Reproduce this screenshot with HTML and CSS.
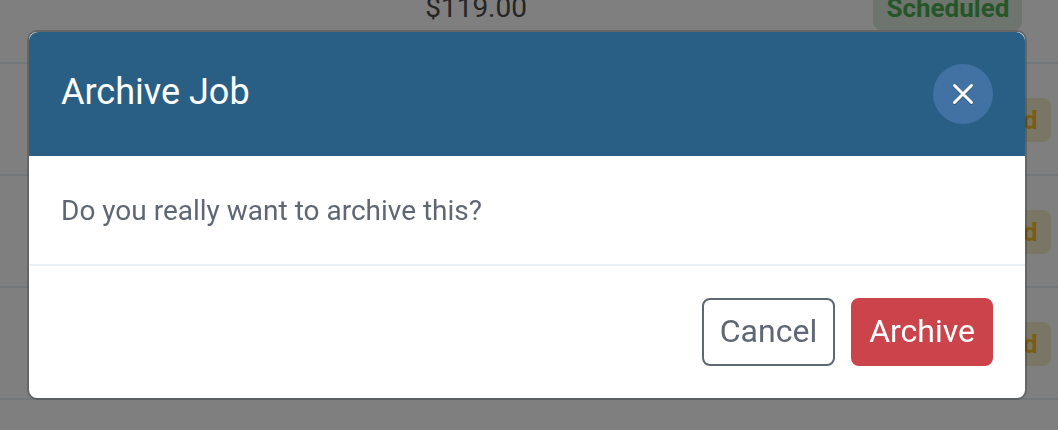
FILE: index.html
```html
<!DOCTYPE html>
<html lang="en">
<head>
    <meta charset="utf-8">
    <meta name="viewport" content="width=device-width, initial-scale=1">
    <title>Archive Job</title>
    <link rel="stylesheet" href="styles.css">
</head>
<body>
    <div class="page">
        <table class="jobs">
            <tbody>
                <tr>
                    <td class="job"></td>
                    <td class="price">$119.00</td>
                    <td></td>
                    <td class="status"><span class="badge badge-success">Scheduled</span></td>
                </tr>
                <tr>
                    <td></td>
                    <td></td>
                    <td></td>
                    <td class="status"><span class="badge badge-warning">Not Dispatched</span></td>
                </tr>
                <tr>
                    <td></td>
                    <td></td>
                    <td></td>
                    <td class="status"><span class="badge badge-warning">Not Dispatched</span></td>
                </tr>
                <tr>
                    <td></td>
                    <td></td>
                    <td></td>
                    <td class="status"><span class="badge badge-warning">Not Dispatched</span></td>
                </tr>
            </tbody>
        </table>
    </div>

    <div class="backdrop">
        <div class="modal" role="dialog" aria-modal="true" aria-labelledby="modal-title">
            <div class="modal-header">
                <h1 id="modal-title">Archive Job</h1>
                <button type="button" class="close" aria-label="Close">
                    <svg width="24" height="26" viewBox="0 0 24 26" fill="none" stroke-width="3" stroke-linecap="round">
                        <path d="M3.5 5.5l17 17m0-17l-17 17" stroke="#1c4868" stroke-opacity=".6"/>
                        <path d="M3.5 4.5l17 17m0-17l-17 17" stroke="#fff"/>
                    </svg>
                </button>
            </div>
            <div class="modal-body">
                <p>Do you really want to archive this?</p>
            </div>
            <div class="modal-footer">
                <button type="button" class="btn btn-outline">Cancel</button>
                <button type="button" class="btn btn-danger">Archive</button>
            </div>
        </div>
    </div>
</body>
</html>
```
FILE: styles.css
```css
* {
    box-sizing: border-box;
}
body {
    margin: 0;
    font-family: Roboto, "Liberation Sans", sans-serif;
    font-size: 28px;
    line-height: 44px;
    color: #5f6774;
    background-color: #fff;
    overflow: hidden;
}
.page {
    height: 100vh;
    overflow: hidden;
}
/* the list is scrolled halfway through its first row */
.jobs {
    width: 100%;
    margin-top: -48px;
    table-layout: fixed;
    border-collapse: separate;
    border-spacing: 0;
}
.jobs td {
    height: 112px;
    padding: 2px 0 0;
    border-bottom: 2px solid #e9eff4;
}
.jobs .job {
    width: 33%;
}
.jobs .price {
    width: 24%;
    text-align: center;
    color: #4a4a4a;
}
.jobs .status {
    width: 21%;
    padding-left: 2px;
    text-align: center;
}
.badge {
    display: inline-block;
    padding: 0 13px;
    border-radius: 8px;
    font-size: 26px;
    font-weight: 700;
    white-space: nowrap;
}
.badge-success {
    color: #4dad4f;
    background-color: #dcebdd;
}
.badge-warning {
    color: #f5bb2a;
    background-color: #f5edcb;
}
.backdrop {
    position: fixed;
    inset: 0;
    padding: 30px 31px 30px 27px;
    background-color: rgba(0, 0, 0, 0.5);
}
.modal {
    background-color: #fff;
    background-clip: padding-box;
    border: 2px solid rgba(0, 0, 0, 0.2);
    border-radius: 10px;
}
.modal-header {
    display: flex;
    justify-content: space-between;
    padding: 32px;
    border-radius: 9px 9px 0 0;
    color: #fff;
    background-color: #295f84;
}
.modal-header h1 {
    margin: 0;
    font-size: 36px;
    font-weight: 400;
    line-height: 56px;
}
.close {
    display: flex;
    align-items: center;
    justify-content: center;
    width: 60px;
    height: 60px;
    padding: 0;
    border: none;
    border-radius: 50%;
    background-color: #4272a4;
    cursor: pointer;
}
.modal-body {
    padding: 33px 32px 31px;
}
.modal-body p {
    margin: 0;
}
.modal-footer {
    display: flex;
    justify-content: flex-end;
    gap: 16px;
    padding: 32px;
    border-top: 2px solid #e9eff4;
}
.btn {
    padding: 7px 16px 9px;
    border: 2px solid transparent;
    border-radius: 8px;
    font-family: inherit;
    font-size: 32px;
    line-height: 48px;
    cursor: pointer;
}
.btn-outline {
    color: #5f6774;
    border-color: #5f6774;
    background-color: #fff;
}
.btn-danger {
    color: #fff;
    border-color: #cc444b;
    background-color: #cc444b;
}
```
